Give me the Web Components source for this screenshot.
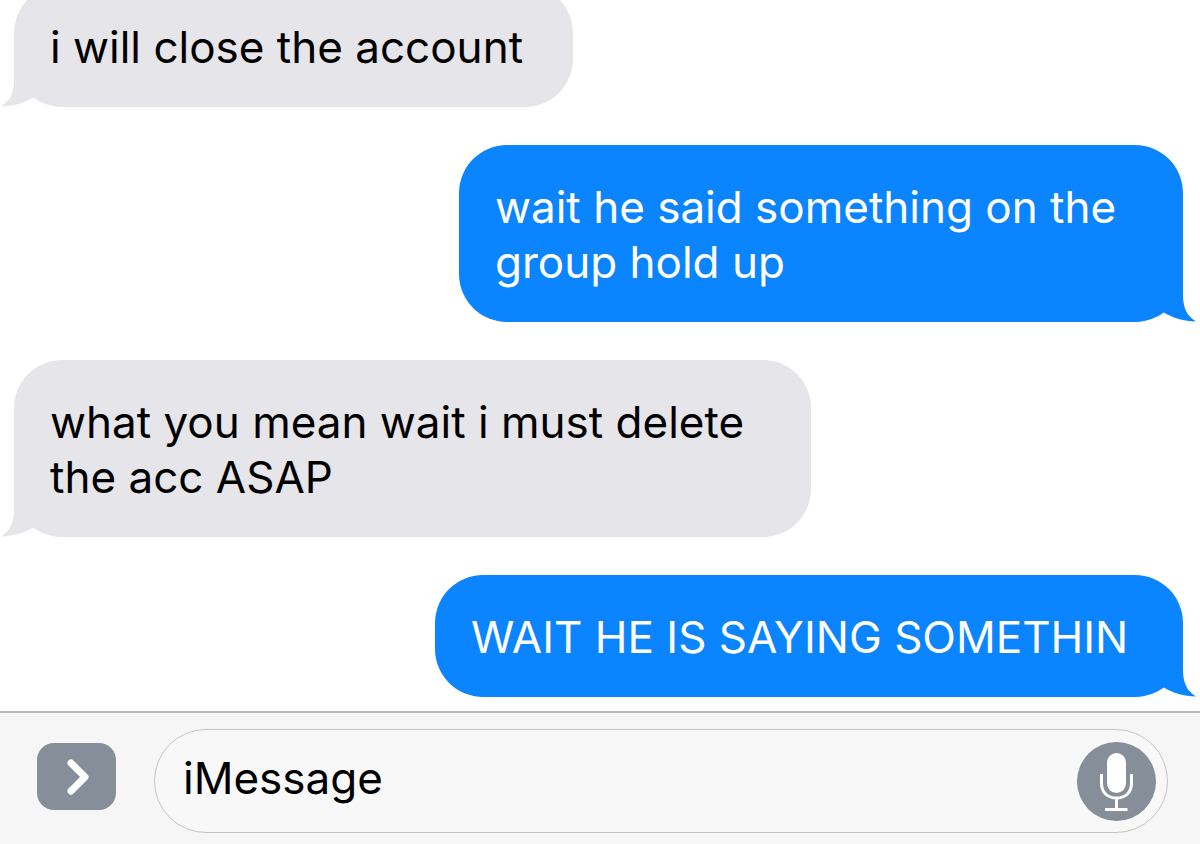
<!DOCTYPE html>
<html lang="en">
<head>
<meta charset="utf-8">
<meta name="viewport" content="width=device-width, initial-scale=1">
<title>Messages</title>
<style>
	body {
		margin: 0;
		background: #fff;
		font-family: Inter, "Liberation Sans", sans-serif;
		font-size: 44px;
		line-height: 55px;
	}
</style>
</head>
<body>
<chat-screen>
	<chat-bubble from="them" style="--width: 559px">i will close the account</chat-bubble>
	<chat-bubble from="me" style="--width: 724px">wait he said something on the group hold up</chat-bubble>
	<chat-bubble from="them" style="--width: 797px">what you mean wait i must delete the acc ASAP</chat-bubble>
	<chat-bubble from="me" style="--width: 748px">WAIT HE IS SAYING SOMETHIN</chat-bubble>
	<message-bar slot="bar"></message-bar>
</chat-screen>

<script>
class ChatScreen extends HTMLElement {
	constructor() {
		super();
		this.attachShadow({ mode: "open" });
		this.shadowRoot.innerHTML = `
		<style>
			:host {
				display: flex;
				flex-direction: column;
				height: 100vh;
			}
			main {
				flex: 1;
				min-height: 0;
				overflow: hidden;
				display: flex;
				flex-direction: column;
				justify-content: flex-end;
				gap: 38px;
				padding: 0 17px 14px 14px;
			}
		</style>
		<main><slot></slot></main>
		<slot name="bar"></slot>
		`;
	}
}

class ChatBubble extends HTMLElement {
	constructor() {
		super();
		this.attachShadow({ mode: "open" });
		this.shadowRoot.innerHTML = `
		<style>
			:host {
				display: block;
				flex: none;
				position: relative;
				box-sizing: border-box;
				width: var(--width);
				max-width: 100%;
				padding: 35px 36px 32px;
				border-radius: 48px;
				background: var(--bubble);
			}
			:host([from="them"]) {
				--bubble: #e5e5ea;
				align-self: flex-start;
				color: #000;
			}
			:host([from="me"]) {
				--bubble: #0b84ff;
				align-self: flex-end;
				color: #fff;
			}
			p {
				margin: 0;
			}
			svg {
				position: absolute;
				bottom: 0;
				left: -14px;
				width: 40px;
				height: 60px;
				fill: var(--bubble);
			}
			:host([from="me"]) svg {
				left: auto;
				right: -14px;
				transform: scaleX(-1);
			}
		</style>
		<p><slot></slot></p>
		<svg viewBox="0 0 40 60" aria-hidden="true">
			<path d="M14 10V33C14 46 10 54 1 59.5C13 59.5 24 56 34 50L40 40Z"/>
		</svg>
		`;
	}
}

class MessageBar extends HTMLElement {
	constructor() {
		super();
		this.attachShadow({ mode: "open" });
		this.shadowRoot.innerHTML = `
		<style>
			:host {
				display: block;
				flex: none;
				border-top: 2px solid #b9b9bb;
				background: #f6f6f6;
			}
			form {
				display: flex;
				align-items: center;
				gap: 38px;
				margin: 0;
				padding: 16px 32px 11px 37px;
			}
			button {
				flex: none;
				display: block;
				padding: 0;
				border: 0;
				background: #868e99;
				cursor: pointer;
			}
			button svg {
				display: block;
				width: 100%;
				height: 100%;
				fill: none;
				stroke: #fff;
			}
			.more {
				width: 79px;
				height: 67px;
				margin-bottom: 10px;
				border-radius: 17px;
			}
			.field {
				flex: 1;
				min-width: 0;
				box-sizing: border-box;
				height: 104px;
				display: flex;
				align-items: center;
				padding: 0 11px 0 28px;
				border: 1px solid #c4c4c6;
				border-radius: 52px;
				background: #f8f8f8;
			}
			input {
				flex: 1;
				min-width: 0;
				height: 56px;
				margin: 0 0 6px;
				padding: 0;
				border: 0;
				outline: 0;
				background: none;
				color: #000;
				font: inherit;
			}
			input::placeholder {
				color: #000;
				opacity: 1;
			}
			.mic {
				width: 79px;
				height: 79px;
				border-radius: 50%;
			}
		</style>
		<form>
			<button class="more" type="button" aria-label="More">
				<svg viewBox="0 0 79 67"><path d="M34 20L48 34L34 48" stroke-width="7" stroke-linecap="round" stroke-linejoin="round"/></svg>
			</button>
			<div class="field">
				<input type="text" placeholder="iMessage" aria-label="iMessage">
				<button class="mic" type="button" aria-label="Record audio">
					<svg viewBox="0 0 79 79">
						<rect x="30" y="11" width="19" height="40" rx="9.5" fill="#fff" stroke="none"/>
						<path d="M24.500 32V41C24.500 51 31 56 39.500 56S54.500 51 54.500 41V32M39.500 56V67M28 67.500H50.500" stroke-width="3"/>
					</svg>
				</button>
			</div>
		</form>
		`;
	}
}

customElements.define("chat-screen", ChatScreen);
customElements.define("chat-bubble", ChatBubble);
customElements.define("message-bar", MessageBar);
</script>
</body>
</html>
